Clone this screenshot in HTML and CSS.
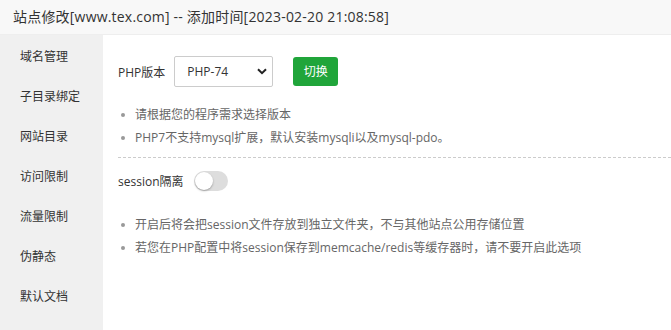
FILE: index.html
```html
<!DOCTYPE html>
<html lang="zh-cn">
<head>
    <meta charset="utf-8">
    <title>站点修改</title>
    <link rel="stylesheet" href="styles.css">
</head>
<body>
    <div id="layer">
        <div class="layer-title">站点修改[www.tex.com] -- 添加时间[2023-02-20 21:08:58]</div>
        <div class="layer-body">
            <ul class="side-menu">
                <li>域名管理</li>
                <li>子目录绑定</li>
                <li>网站目录</li>
                <li>访问限制</li>
                <li>流量限制</li>
                <li>伪静态</li>
                <li>默认文档</li>
            </ul>
            <div class="tab-con">
                <div class="line">
                    <span class="tname">PHP版本</span>
                    <div class="select-box">
                        <span>PHP-74</span>
                        <svg width="10" height="7" viewBox="0 0 10 7"><path d="M1 1.2 L5 5.2 L9 1.2" fill="none" stroke="#222" stroke-width="2"/></svg>
                    </div>
                    <a class="btn-success">切换</a>
                </div>
                <ul class="help-info">
                    <li>请根据您的程序需求选择版本</li>
                    <li>PHP7不支持mysql扩展，默认安装mysqli以及mysql-pdo。</li>
                </ul>
                <div class="line session-line">
                    <span class="tname">session隔离</span>
                    <span class="switch"><i></i></span>
                </div>
                <ul class="help-info">
                    <li>开启后将会把session文件存放到独立文件夹，不与其他站点公用存储位置</li>
                    <li>若您在PHP配置中将session保存到memcache/redis等缓存器时，请不要开启此选项</li>
                </ul>
            </div>
        </div>
    </div>
</body>
</html>
```

FILE: styles.css
```css
body {
    margin: 0;
    background: #fff;
    font-family: "Open Sans", "Noto Sans CJK SC", sans-serif;
    color: #333;
}

#layer {
    width: 671px;
    height: 330px;
    overflow: hidden;
}

.layer-title {
    height: 35px;
    line-height: 33px;
    padding-left: 13px;
    font-size: 14px;
    letter-spacing: 0.2px;
    color: #333;
    background: #f8f8f8;
    border-bottom: 1px solid #eee;
    box-sizing: border-box;
}

.layer-body {
    display: flex;
    height: 295px;
}

.side-menu {
    width: 103px;
    margin: 0;
    padding: 2px 0 0;
    list-style: none;
    background: #f0f0f0;
}

.side-menu li {
    height: 40px;
    line-height: 40px;
    padding-left: 20px;
    font-size: 12px;
    color: #333;
}

.tab-con {
    flex: 1;
    padding: 21px 0 0 15px;
}

.line {
    display: flex;
    align-items: center;
}

.tname {
    font-size: 12px;
    color: #333;
    margin-right: 10px;
}

.select-box {
    width: 99px;
    height: 31px;
    box-sizing: border-box;
    border: 1px solid #ccc;
    border-radius: 2px;
    display: flex;
    align-items: center;
    justify-content: space-between;
    padding: 0 5px 0 12px;
    font-size: 12px;
    color: #333;
    margin-left: -1px;
}

.btn-success {
    display: inline-block;
    width: 45px;
    height: 29px;
    line-height: 29px;
    margin-left: 20px;
    text-align: center;
    font-size: 12px;
    color: #fff;
    background: #20a53a;
    border-radius: 3px;
}

.help-info {
    margin: 16px 0 0;
    padding: 0 0 0 3px;
    list-style: none;
    font-size: 12px;
    color: #666;
}

.help-info li {
    height: 23px;
    line-height: 23px;
    padding-left: 14px;
    position: relative;
}

.help-info li:before {
    content: "";
    position: absolute;
    left: 0;
    top: 10px;
    width: 4px;
    height: 4px;
    border-radius: 50%;
    background: #999;
}

.session-line {
    margin-top: 8px;
    padding-top: 13px;
    border-top: 1px dashed #ccc;
}

.switch {
    display: inline-block;
    width: 34px;
    height: 20px;
    border-radius: 10px;
    background: #ddd;
    position: relative;
}

.switch i {
    position: absolute;
    left: 1px;
    top: 1px;
    width: 18px;
    height: 18px;
    border-radius: 50%;
    background: #fff;
    box-shadow: 0 1px 2px rgba(0, 0, 0, 0.3);
}

.session-line + .help-info {
    margin-top: 22px;
}
```
